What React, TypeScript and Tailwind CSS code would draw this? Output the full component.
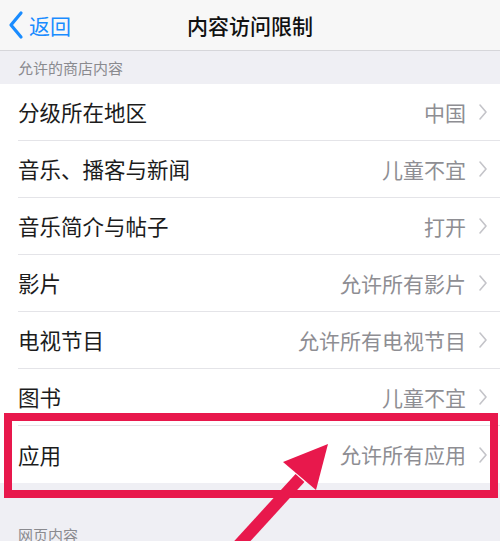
import React from "react";

const rows = [
  { label: "分级所在地区", value: "中国" },
  { label: "音乐、播客与新闻", value: "儿童不宜" },
  { label: "音乐简介与帖子", value: "打开" },
  { label: "影片", value: "允许所有影片" },
  { label: "电视节目", value: "允许所有电视节目" },
  { label: "图书", value: "儿童不宜" },
  { label: "应用", value: "允许所有应用" },
];

function Chevron({ className }: { className?: string }) {
  return (
    <svg width="10" height="18" viewBox="0 0 10 18" className={className}>
      <path d="M2 2 L8 9 L2 16" fill="none" stroke="currentColor" strokeWidth="1.6" strokeLinecap="round" strokeLinejoin="round" />
    </svg>
  );
}

export default function App() {
  return (
    <div
      className="relative w-[500px] h-[541px] overflow-hidden bg-[#efeff4]"
      style={{ fontFamily: '"Noto Sans CJK SC", "Noto Sans", sans-serif' }}
    >
      {/* nav bar */}
      <header className="h-[51px] bg-[#f7f7f7] border-b border-[#d6d6da] flex items-center relative">
        <div className="flex items-center pl-[7px] text-[#1a8cff]">
          <svg width="18" height="30" viewBox="0 0 18 30">
            <path d="M14 3 L4 15 L14 27" fill="none" stroke="currentColor" strokeWidth="3.2" strokeLinecap="round" strokeLinejoin="round" />
          </svg>
          <span className="ml-[4px] text-[21px] leading-none">返回</span>
        </div>
        <div className="absolute inset-0 flex items-center justify-center pointer-events-none">
          <span className="text-[21px] font-medium text-[#111] leading-none">内容访问限制</span>
        </div>
      </header>

      {/* section header */}
      <div className="h-[33px] flex items-center pl-[18px] text-[15px] text-[#8a8a8f] leading-none">允许的商店内容</div>

      {/* list */}
      <div className="bg-white">
        {rows.map((r, i) => (
          <div key={r.label} className="pl-[18px]">
            <div
              className={`h-[57px] flex items-center pr-[12px] ${i < rows.length - 1 ? "border-b border-[#e4e4e8]" : ""}`}
            >
              <span className="text-[21.5px] text-[#1c1c1c] leading-none">{r.label}</span>
              <span className="ml-auto text-[21px] text-[#8e8e93] leading-none">{r.value}</span>
              <Chevron className="ml-[12px] text-[#c4c4c9]" />
            </div>
          </div>
        ))}
      </div>

      {/* next section header */}
      <div className="pt-[44px] pl-[18px] text-[15px] text-[#8a8a8f] leading-none">网页内容</div>

      {/* red highlight box */}
      <div className="absolute left-[4px] top-[413px] w-[494px] h-[85px] border-[8px] border-[#e8184c]" />

      {/* arrow */}
      <svg className="absolute left-0 top-0" width="500" height="541" viewBox="0 0 500 541">
        <line x1="236" y1="548" x2="300" y2="478" stroke="#e8184c" strokeWidth="12" />
        <polygon points="328,444 283,462 316,490" fill="#e8184c" />
      </svg>
    </div>
  );
}
